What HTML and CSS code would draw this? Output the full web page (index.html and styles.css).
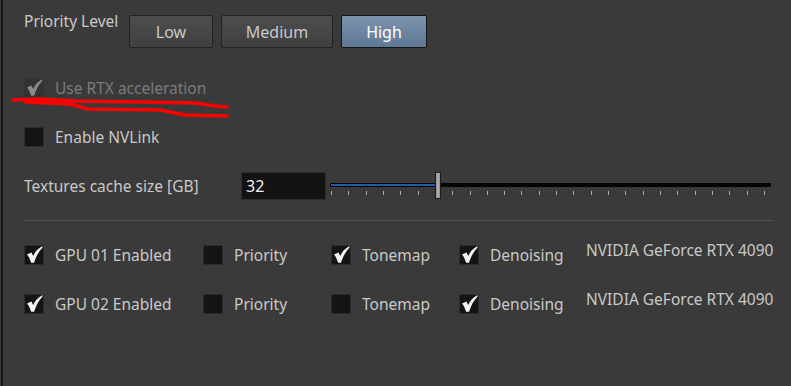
FILE: index.html
```html
<!DOCTYPE html>
<html lang="en">
<head>
  <meta charset="UTF-8">
  <title>Render Settings</title>
  <link rel="stylesheet" href="styles.css">
</head>
<body>
  <div class="panel">
    <div class="row priority">
      <span class="label prio-label">Priority Level</span>
      <div class="seg">
        <button class="btn low">Low</button>
        <button class="btn medium">Medium</button>
        <button class="btn high active">High</button>
      </div>
    </div>

    <label class="check disabled rtx">
      <span class="box"><svg viewBox="1 1 18 18"><path d="M3 9.6 L7.4 7.4 L9.2 11 C11 6.8 14 3.4 18.6 1 L18.3 2.9 C15 6.1 12.1 11 10.1 17.8 L7.1 17.8 C6.1 14.6 5 12 3 9.6 Z"/></svg></span>
      <span>Use RTX acceleration</span>
    </label>

    <label class="check nvlink">
      <span class="box"></span>
      <span>Enable NVLink</span>
    </label>

    <div class="row cache">
      <span class="label cache-label">Textures cache size [GB]</span>
      <div class="num">32</div>
      <div class="slider">
        <div class="track"><div class="fill"></div></div>
        <div class="ticks">
          <i></i><i></i><i></i><i></i><i></i><i></i><i></i><i></i><i></i><i></i><i></i><i></i><i></i>
          <i></i><i></i><i></i><i></i><i></i><i></i><i></i><i></i><i></i><i></i><i></i><i></i><i></i>
        </div>
        <div class="handle"></div>
      </div>
    </div>

    <div class="sep"></div>

    <div class="gpus">
      <label class="check"><span class="box"><svg viewBox="1 1 18 18"><path d="M3 9.6 L7.4 7.4 L9.2 11 C11 6.8 14 3.4 18.6 1 L18.3 2.9 C15 6.1 12.1 11 10.1 17.8 L7.1 17.8 C6.1 14.6 5 12 3 9.6 Z"/></svg></span><span>GPU 01 Enabled</span></label>
      <label class="check"><span class="box"></span><span>Priority</span></label>
      <label class="check"><span class="box"><svg viewBox="1 1 18 18"><path d="M3 9.6 L7.4 7.4 L9.2 11 C11 6.8 14 3.4 18.6 1 L18.3 2.9 C15 6.1 12.1 11 10.1 17.8 L7.1 17.8 C6.1 14.6 5 12 3 9.6 Z"/></svg></span><span>Tonemap</span></label>
      <label class="check"><span class="box"><svg viewBox="1 1 18 18"><path d="M3 9.6 L7.4 7.4 L9.2 11 C11 6.8 14 3.4 18.6 1 L18.3 2.9 C15 6.1 12.1 11 10.1 17.8 L7.1 17.8 C6.1 14.6 5 12 3 9.6 Z"/></svg></span><span>Denoising</span></label>
      <span class="gpu-name">NVIDIA GeForce RTX 4090</span>

      <label class="check"><span class="box"><svg viewBox="1 1 18 18"><path d="M3 9.6 L7.4 7.4 L9.2 11 C11 6.8 14 3.4 18.6 1 L18.3 2.9 C15 6.1 12.1 11 10.1 17.8 L7.1 17.8 C6.1 14.6 5 12 3 9.6 Z"/></svg></span><span>GPU 02 Enabled</span></label>
      <label class="check"><span class="box"></span><span>Priority</span></label>
      <label class="check"><span class="box"></span><span>Tonemap</span></label>
      <label class="check"><span class="box"><svg viewBox="1 1 18 18"><path d="M3 9.6 L7.4 7.4 L9.2 11 C11 6.8 14 3.4 18.6 1 L18.3 2.9 C15 6.1 12.1 11 10.1 17.8 L7.1 17.8 C6.1 14.6 5 12 3 9.6 Z"/></svg></span><span>Denoising</span></label>
      <span class="gpu-name">NVIDIA GeForce RTX 4090</span>
    </div>
  </div>

  <!-- hand-drawn annotation -->
  <svg class="scribble" width="240" height="125" viewBox="0 0 240 125">
    <polyline points="13,100 40,99 75,101 140,102 195,103 215,106 227,107" />
    <polyline points="25,102 70,104 88,109 160,110 185,115 227,116" />
  </svg>
</body>
</html>
```

FILE: styles.css
```css
body {
  margin: 0;
  background: #3a3a3a;
  font-family: "Noto Sans", sans-serif;
  font-size: 15.5px;
  line-height: 20px;
  color: #c9c9c9;
  height: 386px;
  overflow: hidden;
}
.panel {
  margin-left: 1px;
  border-left: 2px solid #161616;
  padding: 11px 17px 0 21px;
  height: 386px;
  box-sizing: border-box;
}
.row {
  display: flex;
}
.priority {
  align-items: flex-start;
}
.prio-label {
  width: 105px;
}
.seg {
  display: flex;
  gap: 8px;
  margin-top: 4px;
}
.btn {
  height: 33px;
  padding: 0;
  font-family: inherit;
  font-size: 16px;
  color: #c9c9c9;
  background: linear-gradient(#4d4d4d, #404040);
  border: 1px solid #232323;
  border-radius: 2px;
}
.low { width: 84px; }
.medium { width: 112px; }
.high { width: 86px; }
.btn.active {
  color: #fff;
  background: linear-gradient(#7d94ae, #5e7895);
  border-color: #151515;
}

.check {
  display: flex;
  align-items: center;
  gap: 11px;
  height: 20px;
}
.box {
  width: 20px;
  height: 20px;
  box-sizing: border-box;
  background: #141414;
  border: 1px solid #2c2c2c;
  flex: none;
}
.box svg {
  display: block;
  width: 18px;
  height: 18px;
  fill: #f2f2f2;
}
.disabled {
  color: #7b7b7b;
}
.disabled .box {
  background: #333;
  border-color: #363636;
}
.disabled .box svg {
  fill: #8a8a8a;
}
.rtx { margin-top: 30px; }
.nvlink { margin-top: 29px; }

.cache {
  margin-top: 25px;
  align-items: center;
  height: 28px;
}
.cache-label {
  width: 217px;
}
.num {
  width: 85px;
  height: 28px;
  box-sizing: border-box;
  background: #131313;
  border: 1px solid #2e2e2e;
  padding: 3px 0 0 4px;
  color: #eee;
  font-size: 16px;
}
.slider {
  position: relative;
  flex: 1;
  height: 28px;
  margin-left: 4px;
}
.track {
  position: absolute;
  left: 0;
  right: 3px;
  top: 11px;
  height: 4px;
  background: #050505;
  border-radius: 1px;
}
.fill {
  width: 104px;
  height: 2px;
  margin-top: 1px;
  margin-left: 1px;
  background: #1f5cab;
}
.ticks {
  position: absolute;
  left: 1px;
  width: 434px;
  top: 19px;
  display: flex;
  justify-content: space-between;
}
.ticks i {
  width: 1px;
  height: 4px;
  background: #a9a9a9;
}
.handle {
  position: absolute;
  left: 105px;
  top: 0;
  width: 6px;
  height: 27px;
  box-sizing: border-box;
  background: linear-gradient(90deg, #8a8a8a, #b5b5b5 50%, #8a8a8a);
  border: 1px solid #1c1c1c;
}

.sep {
  margin-top: 20px;
  height: 1px;
  background: #4e4e4e;
}

.gpus {
  margin-top: 24px;
  display: grid;
  grid-template-columns: 179px 128px 128px 127px auto;
  row-gap: 29px;
  align-items: center;
}
.gpu-name {
  align-self: start;
  margin-top: -5px;
  white-space: nowrap;
}

.scribble {
  position: absolute;
  left: 0;
  top: 0;
}
.scribble polyline {
  fill: none;
  stroke: #ff0000;
  stroke-width: 3.5;
  stroke-linecap: round;
  stroke-linejoin: round;
}
```
